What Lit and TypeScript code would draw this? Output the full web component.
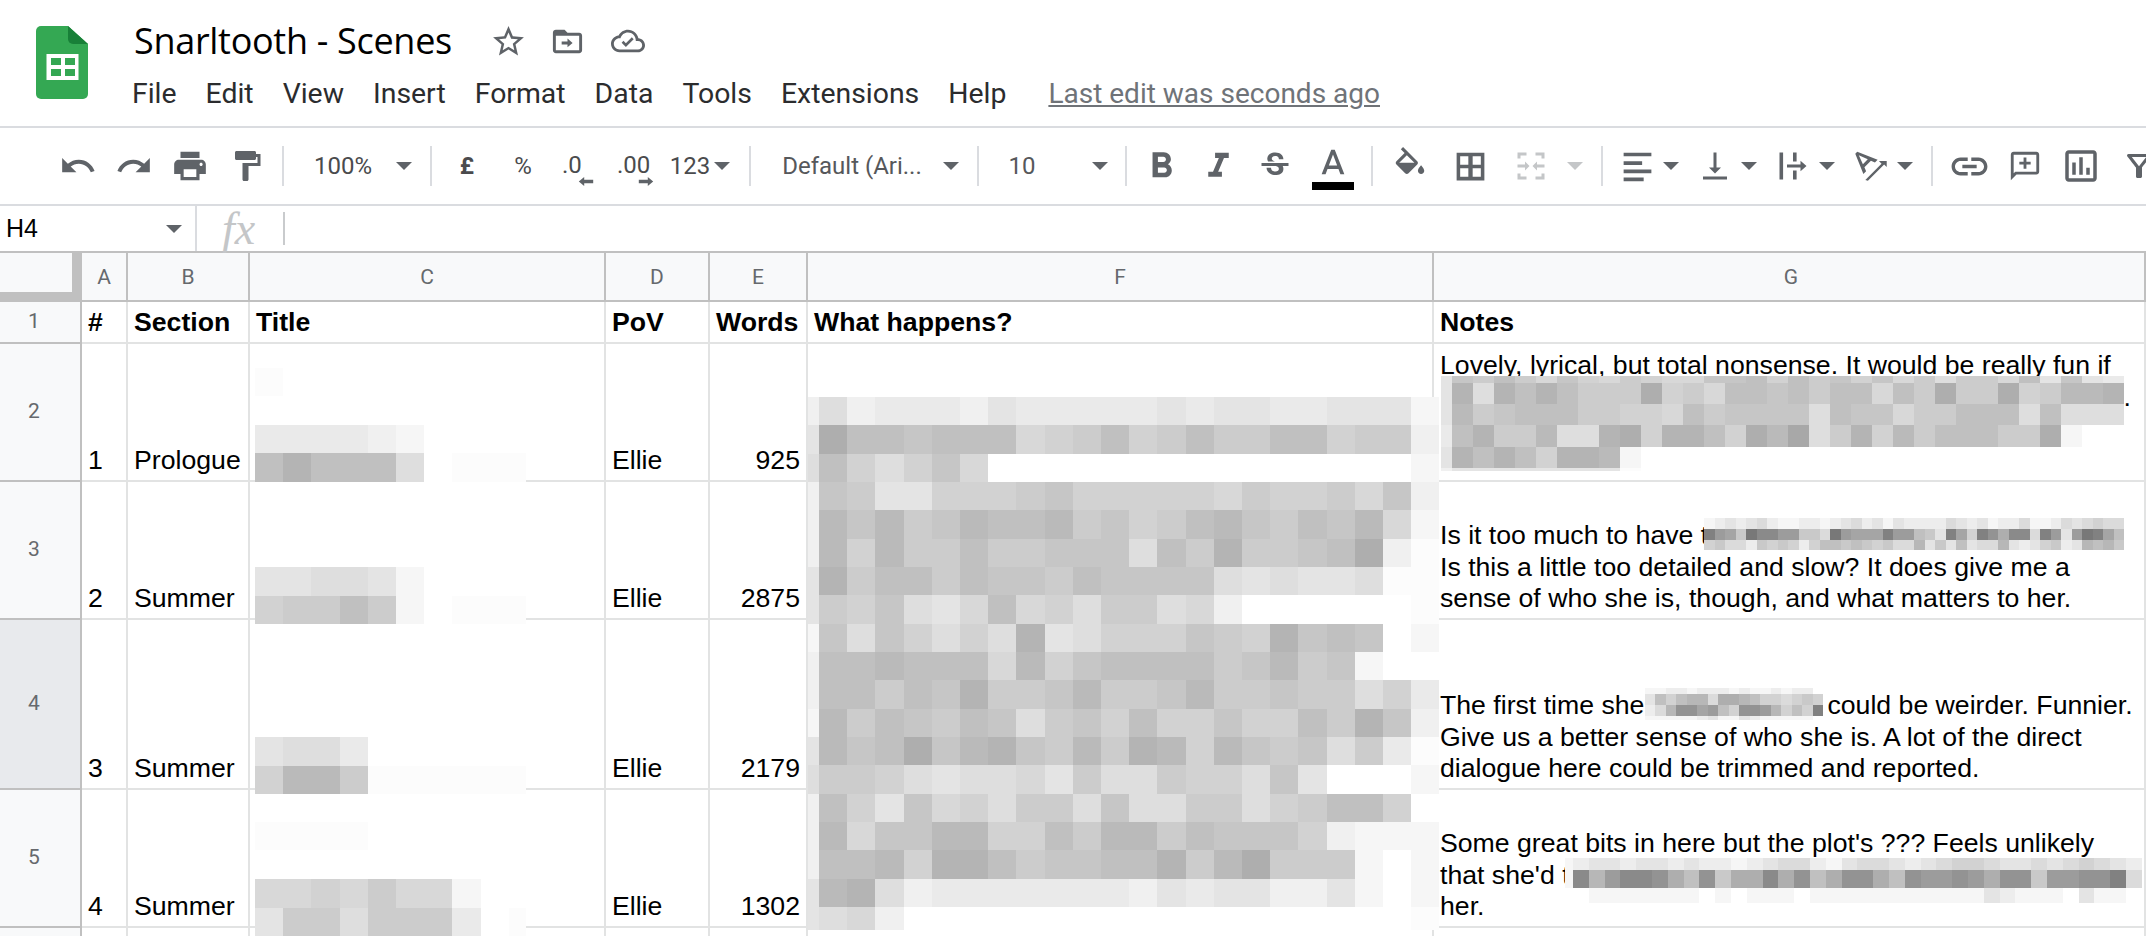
import { LitElement, html, css, svg, TemplateResult } from "lit";
import { customElement } from "lit/decorators.js";

const P = {
  undo: "M12.5 8c-2.65 0-5.05.99-6.9 2.6L2 7v9h9l-3.62-3.62c1.39-1.16 3.16-1.88 5.12-1.88 3.54 0 6.55 2.31 7.6 5.5l2.37-.78C21.08 11.03 17.15 8 12.5 8z",
  redo: "M18.4 10.6C16.55 8.99 14.15 8 11.5 8c-4.65 0-8.58 3.03-9.96 7.22L3.9 16c1.05-3.19 4.05-5.5 7.6-5.5 1.95 0 3.73.72 5.12 1.88L13 16h9V7l-3.6 3.6z",
  print: "M19 8H5c-1.66 0-3 1.34-3 3v6h4v4h12v-4h4v-6c0-1.66-1.34-3-3-3zm-3 11H8v-5h8v5zm3-7c-.55 0-1-.45-1-1s.45-1 1-1 1 .45 1 1-.45 1-1 1zm-1-9H6v4h12V3z",
  paint: "M18 4V3c0-.55-.45-1-1-1H5c-.55 0-1 .45-1 1v4c0 .55.45 1 1 1h12c.55 0 1-.45 1-1V6h1v4H9v11c0 .55.45 1 1 1h2c.55 0 1-.45 1-1v-9h8V4h-3z",
  bold: "M15.6 10.79c.97-.67 1.65-1.77 1.65-2.79 0-2.26-1.75-4-4-4H7v14h7.04c2.09 0 3.71-1.7 3.71-3.79 0-1.52-.86-2.82-2.15-3.42zM10 6.5h3c.83 0 1.5.67 1.5 1.5s-.67 1.5-1.5 1.5h-3v-3zm3.5 9H10v-3h3.5c.83 0 1.5.67 1.5 1.5s-.67 1.5-1.5 1.5z",
  italic: "M10 4v3h2.21l-3.42 8H6v3h8v-3h-2.21l3.42-8H18V4z",
  strike: "M6.85 7.08C6.85 4.37 9.45 3 12.24 3c1.64 0 3 .49 3.9 1.28.77.65 1.46 1.73 1.46 3.24h-3.01c0-.31-.05-.59-.15-.85-.29-.86-1.2-1.28-2.25-1.28-1.86 0-2.34 1.02-2.34 1.7 0 .48.25.88.74 1.21.38.25.77.48 1.41.7H7.39c-.21-.34-.54-.89-.54-1.92zM21 12v-2H3v2h9.62c1.15.45 1.96.75 1.96 1.97 0 1-.81 1.67-2.28 1.67-1.54 0-2.93-.54-2.93-2.51H6.4c0 .55.08 1.13.24 1.58.81 2.29 3.29 3.3 5.67 3.3 2.27 0 5.3-.89 5.3-4.05 0-.3-.01-1.16-.48-1.94H21V12z",
  textA: "M11 3L5.5 17h2.25l1.12-3h6.25l1.12 3h2.25L13 3h-2zm-1.38 9L12 5.67 14.38 12H9.62z",
  fill: "M16.56 8.94L7.62 0 6.21 1.41l2.38 2.38-5.15 5.15c-.59.59-.59 1.54 0 2.12l5.5 5.5c.29.29.68.44 1.06.44s.77-.15 1.06-.44l5.5-5.5c.59-.58.59-1.53 0-2.12zM5.21 10L10 5.21 14.79 10H5.21zM19 11.5s-2 2.17-2 3.5c0 1.1.9 2 2 2s2-.9 2-2c0-1.33-2-3.5-2-3.5z",
  borders: "M3 3v18h18V3zm7.600 15.700H5.300v-5.600h5.300zm0-7.800H5.300V5.300h5.300zm8.100 7.800h-5.300v-5.600h5.300zm0-7.800h-5.300V5.300h5.300z",
  merge: "M3 3h6v2H5v2H3zM15 3h6v4h-2V5h-4zM3 17h2v2h4v2H3zM19 17h2v4h-6v-2h4zM3 11h5V9l3 3-3 3v-2H3zM21 11h-5V9l-3 3 3 3v-2h5z",
  align: "M3 3h18v2.400H3zM3 8.600h12V11H3zM3 14h18v2.400H3zM3 19.200h13v2.400H3z",
  valign: "M16 13h-3V3h-2v10H8l4 4 4-4zM4 19v2h16v-2H4z",
  wrap: "M3 3h2.400v18H3zM12 3h2.400v6H12zM12 15h2.400v6H12zM8 11h9V8.500l4 3.500-4 3.500V13H8z",
  rotate: "M4.49 4.21L3.43 5.27 7.85 16.4l1.48-1.48-.92-2.19 3.54-3.54 2.19.92 1.48-1.48L4.49 4.21zm3.09 6.8L5.36 6.14l4.87 2.23-2.65 2.64zm12.99-1.68h-4.24l1.41 1.41-8.84 8.84L10.32 20l8.84-8.84 1.41 1.41V8.33z",
  link: "M3.9 12c0-1.71 1.39-3.1 3.1-3.1h4V7H7c-2.76 0-5 2.24-5 5s2.24 5 5 5h4v-1.9H7c-1.71 0-3.1-1.39-3.1-3.1zM8 13h8v-2H8v2zm9-6h-4v1.9h4c1.71 0 3.1 1.39 3.1 3.1s-1.39 3.1-3.1 3.1h-4V17h4c2.76 0 5-2.24 5-5s-2.24-5-5-5z",
  comment: "M2 22l4-4h14c1.1 0 2-.9 2-2V4c0-1.1-.9-2-2-2H4c-1.1 0-2 .9-2 2v18zM4 4h16v12H5.17L4 17.17V4zm9 2h-2v3H8v2h3v3h2v-3h3V9h-3z",
  chart: "M9 17H7v-7h2v7zm4 0h-2V7h2v10zm4 0h-2v-4h2v4zm2 2H5V5h14v14zm0-16H5c-1.1 0-2 .9-2 2v14c0 1.1.9 2 2 2h14c1.1 0 2-.9 2-2V5c0-1.1-.9-2-2-2z",
  filter: "M4.25 5.61C6.27 8.2 10 13 10 13v6c0 .55.45 1 1 1h2c.55 0 1-.45 1-1v-6s3.72-4.8 5.74-7.39A1 1 0 0 0 18.95 4H5.04a1 1 0 0 0-.79 1.61zM7.2 6h9.600L12 12.200z",
  star: "M22 9.24l-7.19-.62L12 2 9.19 8.63 2 9.24l5.46 4.73L5.82 21 12 17.27 18.18 21l-1.63-7.03L22 9.24zM12 15.4l-3.76 2.27 1-4.28-3.32-2.88 4.38-.38L12 6.1l1.71 4.04 4.38.38-3.32 2.88 1 4.28L12 15.4z",
  folder: "M20 6h-8l-2-2H4c-1.1 0-2 .9-2 2v12c0 1.1.9 2 2 2h16c1.1 0 2-.9 2-2V8c0-1.1-.9-2-2-2zm0 12H4V8h16v10zm-8-2v-2H8v-2h4v-2l3.500 3z",
  cloud: "M19.35 10.04C18.67 6.59 15.64 4 12 4 9.11 4 6.6 5.64 5.35 8.04 2.34 8.36 0 10.91 0 14c0 3.31 2.69 6 6 6h13c2.76 0 5-2.24 5-5 0-2.64-2.05-4.78-4.65-4.96zM19 18H6c-2.21 0-4-1.79-4-4s1.79-4 4-4h.71C7.37 7.69 9.48 6 12 6c3.04 0 5.5 2.46 5.5 5.5v.5H19c1.66 0 3 1.34 3 3s-1.34 3-3 3zM10.5 16.2l-3-3 1.3-1.3 1.7 1.7 4.2-4.2 1.3 1.3z",
};

const ic = (d: string, size: number, cls = "") =>
  html`<svg class="ic ${cls}" width=${size} height=${size} viewBox="0 0 24 24"><path d=${d} fill-rule="evenodd"></path></svg>`;

const arrow = (cls = "") => html`<i class="tri ${cls}"></i>`;
const sep = html`<i class="sep"></i>`;
const txt = (t: string, cls = "") => html`<span class="tt ${cls}">${t}</span>`;
const dec = (t: string, right: boolean) => html`<div class="dec">
  <span class="tt">${t}</span>
  <svg width="16" height="10" viewBox="0 0 16 10"><path d=${right ? "M16 5l-6-5v3H0v4h10v3z" : "M0 5l6-5v3h10v4H6v3z"} fill="#5f6368"></path></svg>
</div>`;

type Item = { c: number; w: number; t: TemplateResult };
const tools: Item[] = [
  { c: 78, w: 38, t: ic(P.undo, 38) },
  { c: 134, w: 38, t: ic(P.redo, 38) },
  { c: 190, w: 38, t: ic(P.print, 38) },
  { c: 247, w: 36, t: ic(P.paint, 36) },
  { c: 283, w: 2, t: sep },
  { c: 343, w: 62, t: txt("100%") },
  { c: 404, w: 16, t: arrow() },
  { c: 431, w: 2, t: sep },
  { c: 467, w: 20, t: txt("£", "b") },
  { c: 523, w: 24, t: txt("%") },
  { c: 578, w: 32, t: dec(".0", false) },
  { c: 635.5, w: 37, t: dec(".00", true) },
  { c: 690, w: 42, t: txt("123") },
  { c: 722, w: 16, t: arrow() },
  { c: 750, w: 2, t: sep },
  { c: 852, w: 142, t: txt("Default (Ari...", "soft") },
  { c: 951, w: 16, t: arrow() },
  { c: 978, w: 2, t: sep },
  { c: 1022, w: 30, t: txt("10", "soft") },
  { c: 1100, w: 16, t: arrow() },
  { c: 1126, w: 2, t: sep },
  { c: 1161, w: 43, t: ic(P.bold, 43) },
  { c: 1218, w: 41, t: ic(P.italic, 41) },
  { c: 1274.5, w: 36, t: ic(P.strike, 36) },
  {
    c: 1333,
    w: 42,
    t: html`<div class="color"><svg class="ic" width="28" height="28" viewBox="4 2 16 16"><path d=${P.textA} fill-rule="evenodd"></path></svg><i></i></div>`,
  },
  { c: 1371.5, w: 2, t: sep },
  { c: 1410, w: 38, t: ic(P.fill, 38) },
  { c: 1470, w: 37, t: ic(P.borders, 37) },
  { c: 1531, w: 36, t: ic(P.merge, 36, "off") },
  { c: 1575, w: 16, t: arrow("off") },
  { c: 1602, w: 2, t: sep },
  { c: 1637, w: 37, t: ic(P.align, 37) },
  { c: 1671, w: 16, t: arrow() },
  { c: 1715, w: 36, t: ic(P.valign, 36) },
  { c: 1749, w: 16, t: arrow() },
  { c: 1793, w: 36, t: ic(P.wrap, 36) },
  { c: 1827, w: 16, t: arrow() },
  { c: 1871, w: 44, t: ic(P.rotate, 44) },
  { c: 1905, w: 16, t: arrow() },
  { c: 1932, w: 2, t: sep },
  { c: 1969, w: 43, t: ic(P.link, 43) },
  { c: 2025, w: 34, t: ic(P.comment, 34) },
  { c: 2080.5, w: 42, t: ic(P.chart, 42) },
  { c: 2139, w: 36, t: ic(P.filter, 36) },
];

/* Blocks of pixelated redaction that sit over the sheet. */
type Block = {
  x: number; first: number; cw: number; ys: number[]; rows: string[];
  base: number; step: number; maxX?: number;
};
const L = { base: 0xa8, step: 6 };
const D = { base: 0x78, step: 9 };
const step = (n: number, from: number, d: number) => Array.from({ length: n }, (_, i) => from + i * d);

const blocks: Block[] = [
  {
    x: 808.4, first: 10.6, cw: 28.2, ...L,
    ys: [...step(19, 397, 28.33), 930],
    rows: [
      "c" + "9cbbbcabbbbbabaabbaaa" + "d",
      "a" + "144544487647646644766" + "c",
      "9" + "479758" + "fffffffffffffff" + "d",
      "c" + "56aa777657" + "7777867768" + "5" + "c",
      "c" + "3536534436" + "5764356453" + "8" + "d",
      "c" + "3736646655" + "5946266541" + "c" + "e",
      "a" + "2644645564" + "55559a9aa9" + "e" + "e",
      "a" + "6759a84879" + "6698cfffff" + "f" + "e",
      "d" + "59579792a9" + "7775672545" + "f" + "d",
      "c" + "4434448375" + "444465365d" + "f" + "f",
      "c" + "4464526653" + "6653665669" + "7" + "b",
      "d" + "3645645965" + "7477577462" + "5" + "c",
      "a" + "3541532563" + "6237356596" + "b" + "e",
      "9" + "6679a998a6" + "9967795aff" + "f" + "d",
      "c" + "47a5879669" + "5996697644" + "7" + "f",
      "c" + "3855337746" + "33645557cd" + "d" + "d",
      "c" + "4437224655" + "442631666d" + "f" + "d",
      "a" + "329cbbbbbb" + "bcabaaccad" + "f" + "d",
      "a" + "98cffffffffffffffffff" + "e",
    ],
  },
  {
    x: 1441, first: 10.6, cw: 21, ...L,
    ys: [376, 383, 404, 425.3, 446.7, 468, 471],
    rows: [
      "a5646857867885547465758696684a5ab",
      "a29242466617684454644846166176332",
      "a36544466778465555945586644494999",
      "b42663992172247130962736444661dff".slice(0, 33),
      "a24247223dfffffffffffffffffffffff",
      "caaaaaaaaefffffffffffffffffffffff",
    ],
  },
  {
    x: 1704, first: 0, cw: 10.5, ...D,
    ys: [518, 528.5, 539.5, 550],
    rows: [
      "edcdcbdeeddedcbdcecddddbcdceddbeedbcbabb",
      "14590224499b0455514489c15a13622b14c40158",
      "a9bbd9a9ada88989a9bb7c9c8cbb7cdca9dc7879",
    ],
  },
  {
    x: 1644.5, first: 0, cw: 10.5, ...D,
    ys: [688, 694, 705, 716, 720],
    rows: ["eeddedddedeededdf", "c8a877b6678aaba9a", "db733548a3347a8a1", "eeeeedceecdeeeeef"],
  },
  {
    x: 1565, first: 8, cw: 15.8, ...D,
    ys: [858, 870, 888, 903],
    rows: [
      "edccdccdcddedcbbdecbbcdcbaabccbcbabcd",
      "e27422368396626386336834434633944331b",
      "ffeeeeeeefefeeefeeeeeeeeeeecdeeefceef",
    ],
  },
  {
    x: 255, first: 0, cw: 28.2, ...L, maxX: 526,
    ys: [368, 396, 425, 453.3, 482],
    rows: ["e", "", "bbbbcd", "424449feee"],
  },
  {
    x: 255, first: 0, cw: 28.2, ...L, maxX: 526,
    ys: [567, 596, 624],
    rows: ["aa99ad", "76646dfeeee"],
  },
  {
    x: 255, first: 0, cw: 28.2, ...L, maxX: 526,
    ys: [737, 765.7, 794],
    rows: ["a99b", "7336eeeeee"],
  },
  {
    x: 255, first: 0, cw: 28.2, ...L, maxX: 526,
    ys: [822, 850, 879.3, 907.6, 936],
    rows: ["eeee", "", "8878688d", "a669666bfee"],
  },
];

const rects = blocks.flatMap((b) =>
  b.rows.flatMap((row, r) =>
    [...row].map((ch, i) => {
      const g = Math.min(255, b.base + parseInt(ch, 16) * b.step);
      const x = i === 0 && b.first ? b.x : b.x + b.first + (b.first ? i - 1 : i) * b.cw;
      let w = i === 0 && b.first ? b.first : b.cw;
      if (b.maxX) w = Math.min(w, b.maxX - x);
      return { x, y: b.ys[r], w: Math.max(w, 0), h: b.ys[r + 1] - b.ys[r], g };
    })
  )
);

const colLabels = ["A", "B", "C", "D", "E", "F", "G"];
const head = ["#", "Section", "Title", "PoV", "Words", "What happens?", "Notes"];
const rows: { n: number; s: string; w: string; notes: TemplateResult }[] = [
  {
    n: 1, s: "Prologue", w: "925",
    notes: html`<div>Lovely, lyrical, but total nonsense. It would be really fun if</div>
      <div class="dot">.</div><div class="blank"></div><div class="blank"></div>`,
  },
  {
    n: 2, s: "Summer", w: "2875",
    notes: html`<div>Is it too much to have t</div>
      <div>Is this a little too detailed and slow? It does give me a</div>
      <div>sense of who she is, though, and what matters to her.</div>`,
  },
  {
    n: 3, s: "Summer", w: "2179",
    notes: html`<div>The first time she<span class="gap"></span>could be weirder. Funnier.</div>
      <div>Give us a better sense of who she is. A lot of the direct</div>
      <div>dialogue here could be trimmed and reported.</div>`,
  },
  {
    n: 4, s: "Summer", w: "1302",
    notes: html`<div>Some great bits in here but the plot's ??? Feels unlikely</div>
      <div>that she'd t</div>
      <div>her.</div>`,
  },
];

@customElement("app-root")
export class AppRoot extends LitElement {
  static styles = css`
    :host {
      display: block;
      width: 2146px;
      height: 936px;
      overflow: hidden;
      background: #fff;
      font-family: Roboto, "Liberation Sans", sans-serif;
      color: #202124;
    }
    .ic { fill: #5f6368; display: block; flex: none; }
    .ic.off { fill: #c4c6c8; }

    .top { display: flex; height: 126px; box-sizing: border-box; padding: 26px 0 0 36px; }
    .logo { flex: none; display: block; }
    .titles { margin-left: 46px; margin-top: -6px; display: flex; flex-direction: column; }
    .titlerow { display: flex; align-items: center; height: 42px; }
    .doc { font-size: 36px; line-height: 42px; color: #000; font-family: "Open Sans", Roboto, sans-serif; letter-spacing: -0.3px; }
    .star { margin-left: 38px; }
    .folder { margin-left: 23px; }
    .cloud { margin-left: 26px; }
    .menu { display: flex; gap: 29px; margin: 16px 0 0 -2px; font-size: 28.4px; line-height: 32px; color: #2b2c2e; }
    .last { color: #6f7378; text-decoration: underline; margin-left: 13px; font-size: 28px; }

    .toolbar {
      display: flex; align-items: center; height: 76px;
      border-top: 2px solid #dadce0; border-bottom: 2px solid #dadce0;
      overflow: hidden;
    }
    .slot { flex: none; display: flex; justify-content: center; align-items: center; }
    .tt { font-size: 24px; line-height: 24px; color: #4a4b4d; white-space: nowrap; }
    .tt.b { font-weight: 700; }
    .tt.soft { color: #56585b; }
    .tri { display: block; width: 0; height: 0; border: 8px solid transparent; border-top-color: #5f6368; border-bottom: 0; }
    .tri.off { border-top-color: #c4c6c8; }
    .sep { display: block; width: 2px; height: 40px; background: #dadce0; }
    .dec { width: 100%; height: 40px; box-sizing: border-box; padding-top: 7px; display: flex; flex-direction: column; justify-content: flex-start; }
    .dec svg { align-self: flex-end; display: block; }
    .color { display: flex; flex-direction: column; align-items: center; width: 42px; margin-top: 6px; }
    .color i { display: block; width: 42px; height: 8px; background: #000; margin-top: 6px; }

    .formula { display: flex; align-items: center; height: 45px; border-bottom: 2px solid #c0c0c0; }
    .name { width: 197px; height: 100%; flex: none; box-sizing: border-box; padding: 0 13px 0 6px; display: flex; align-items: center; justify-content: space-between; border-right: 2px solid #dadce0; font: 25px "Liberation Sans", sans-serif; color: #000; }
    .fxbox { height: 33px; width: 63px; box-sizing: border-box; margin-left: 25px; border-right: 2px solid #c9cbcd; display: flex; align-items: center; font: italic 46px "Liberation Serif", serif; color: #c4c6c8; }

    .sheet {
      position: relative;
      display: grid;
      grid-template-columns: 82px 46px 122px 356px 104px 98px 626px 712px;
      grid-template-rows: 49px 42px 138px 138px 170px 138px 40px;
      font: 26.67px/31.7px "Liberation Sans", sans-serif;
      color: #000;
    }
    .corner { background: #f8f9fa; border-right: 10px solid #c0c0c0; border-bottom: 10px solid #c0c0c0; }
    .ch, .rh {
      background: #f8f9fa; border-right: 2px solid #c0c0c0; border-bottom: 2px solid #c0c0c0;
      display: flex; align-items: center; justify-content: center;
      font: 21px Roboto, sans-serif; color: #66696d;
    }
    .ch.g { padding-left: 4px; }
    .rh { padding: 0 12px 2px 0; }
    .rh.active { background: #e8eaed; }
    .c {
      border-right: 2px solid #e2e3e3; border-bottom: 2px solid #e2e3e3;
      padding: 0 5px 3px 6px;
      display: flex; flex-direction: column; justify-content: flex-end;
      white-space: nowrap; overflow: hidden; min-width: 0;
    }
    .c.h { font-weight: 700; }
    .c.r { text-align: right; padding-right: 6px; }
    .c.h.r { padding-right: 8px; }
    .dot { text-align: right; padding-right: 8px; }
    .blank { height: 31.7px; }
    .gap { display: inline-block; width: 183px; }
    .mosaic { position: absolute; left: 0; top: 0; display: block; pointer-events: none; }
  `;

  private toolbar() {
    let cursor = 0;
    return tools.map((it) => {
      const ml = it.c - it.w / 2 - cursor;
      cursor = it.c + it.w / 2;
      return html`<div class="slot" style="margin-left:${ml}px;width:${it.w}px">${it.t}</div>`;
    });
  }

  render() {
    return html`
      <header class="top">
        <svg class="logo" width="52" height="73" viewBox="0 0 52 73">
          <path d="M5 0h27l20 18v50a5 5 0 0 1-5 5H5a5 5 0 0 1-5-5V5a5 5 0 0 1 5-5z" fill="#34a853"></path>
          <path d="M32 0l20 18H37a5 5 0 0 1-5-5z" fill="#188038"></path>
          <path d="M10.500 28h32v26h-32zM15 32v7h10v-7zM29 32v7h10v-7zM15 43v7h10v-7zM29 43v7h10v-7z" fill="#fff" fill-rule="evenodd"></path>
        </svg>
        <div class="titles">
          <div class="titlerow">
            <span class="doc">Snarltooth - Scenes</span>
            ${ic(P.star, 37, "star")}${ic(P.folder, 35, "folder")}${ic(P.cloud, 34, "cloud")}
          </div>
          <nav class="menu">
            ${["File", "Edit", "View", "Insert", "Format", "Data", "Tools", "Extensions", "Help"].map((m) => html`<span>${m}</span>`)}
            <span class="last">Last edit was seconds ago</span>
          </nav>
        </div>
      </header>
      <div class="toolbar">${this.toolbar()}</div>
      <div class="formula">
        <div class="name"><span>H4</span>${arrow()}</div>
        <div class="fxbox">fx</div>
      </div>
      <div class="sheet">
        <div class="corner"></div>
        ${colLabels.map((l) => html`<div class="ch ${l === "G" ? "g" : ""}">${l}</div>`)}

        <div class="rh">1</div>
        ${head.map((h, i) => html`<div class="c h ${i === 4 ? "r" : ""}">${h}</div>`)}

        ${rows.map(
          (r, i) => html`
            <div class="rh ${i === 2 ? "active" : ""}">${i + 2}</div>
            <div class="c">${r.n}</div>
            <div class="c">${r.s}</div>
            <div class="c"></div>
            <div class="c">Ellie</div>
            <div class="c r">${r.w}</div>
            <div class="c"></div>
            <div class="c">${r.notes}</div>
          `
        )}
        <div class="rh"></div>
        ${[0, 1, 2, 3, 4, 5, 6].map(() => html`<div class="c"></div>`)}
        <svg class="mosaic" width="2146" height="683" viewBox="0 253 2146 683" shape-rendering="crispEdges">
          ${rects.map(
            (q) => svg`<rect x=${q.x} y=${q.y} width=${q.w} height=${q.h} fill="rgb(${q.g},${q.g},${q.g})"></rect>`
          )}
        </svg>
      </div>
    `;
  }
}
